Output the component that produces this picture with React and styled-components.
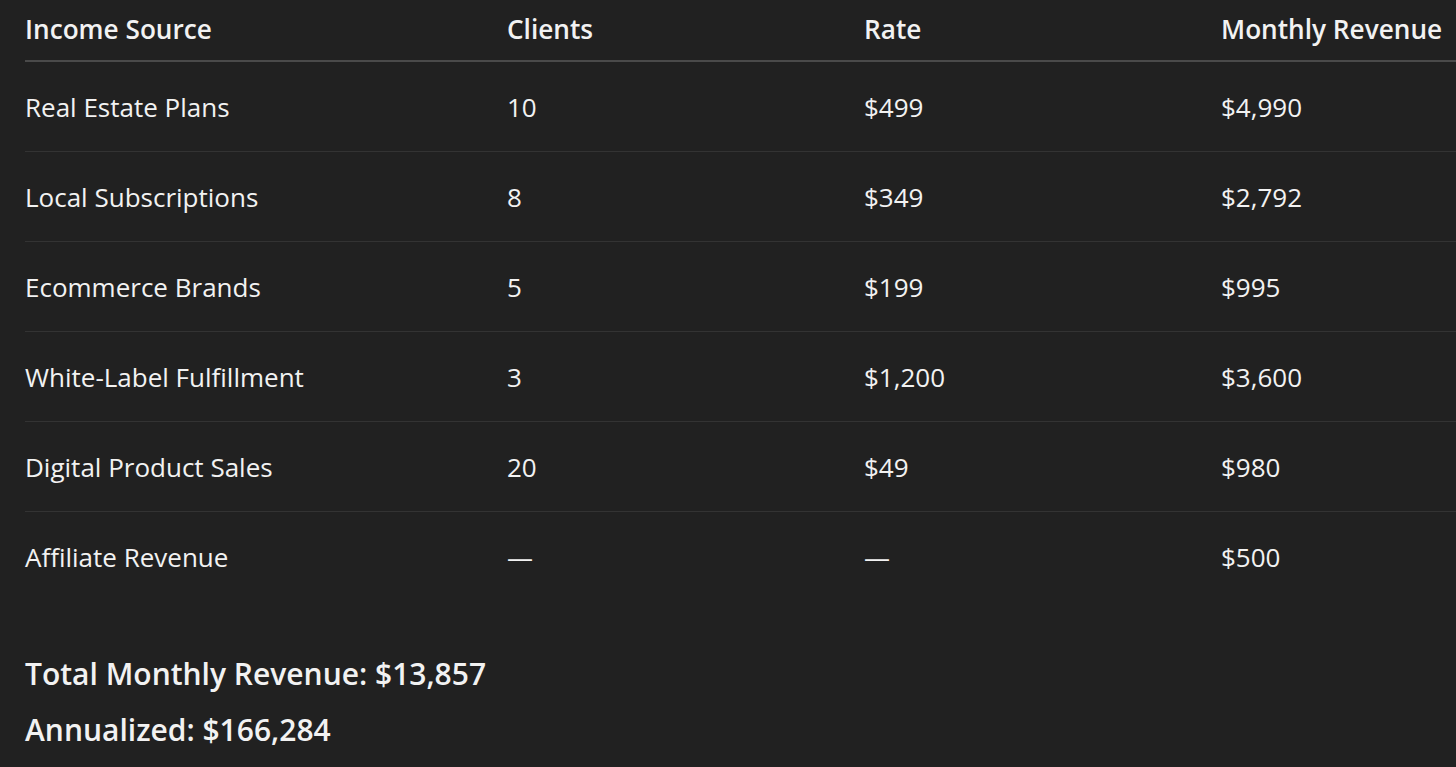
import React from 'react';
import styled, { createGlobalStyle } from 'styled-components';

const GlobalStyle = createGlobalStyle`
  html, body {
    margin: 0;
    padding: 0;
    background: #212121;
    overflow: hidden;
  }
  body {
    font-family: "Open Sans", "Noto Sans", sans-serif;
    color: #f2f2f2;
  }
`;

const rows = [
  { source: 'Real Estate Plans', clients: '10', rate: '$499', revenue: '$4,990' },
  { source: 'Local Subscriptions', clients: '8', rate: '$349', revenue: '$2,792' },
  { source: 'Ecommerce Brands', clients: '5', rate: '$199', revenue: '$995' },
  { source: 'White-Label Fulfillment', clients: '3', rate: '$1,200', revenue: '$3,600' },
  { source: 'Digital Product Sales', clients: '20', rate: '$49', revenue: '$980' },
  { source: 'Affiliate Revenue', clients: '—', rate: '—', revenue: '$500' },
];

const App = () => {
  return (
    <Page>
      <GlobalStyle />
      <Table>
        <colgroup>
          <col style={{ width: 482 }} />
          <col style={{ width: 357 }} />
          <col style={{ width: 357 }} />
          <col style={{ width: 357 }} />
        </colgroup>
        <thead>
          <tr>
            <HeadCell>Income Source</HeadCell>
            <HeadCell>Clients</HeadCell>
            <HeadCell>Rate</HeadCell>
            <HeadCell>Monthly Revenue</HeadCell>
          </tr>
        </thead>
        <tbody>
          {rows.map(({ source, clients, rate, revenue }, i) => (
            <Row key={source} $last={i === rows.length - 1}>
              <Cell>{source}</Cell>
              <Cell>{clients}</Cell>
              <Cell>{rate}</Cell>
              <Cell>{revenue}</Cell>
            </Row>
          ))}
        </tbody>
      </Table>
      <Summary>
        <SummaryLine>Total Monthly Revenue: $13,857</SummaryLine>
        <SummaryLine>Annualized: $166,284</SummaryLine>
      </Summary>
    </Page>
  );
};

const Page = styled.div`
  width: 1456px;
  height: 767px;
  padding-left: 25px;
  box-sizing: border-box;
  overflow: hidden;
`;

const Table = styled.table`
  border-collapse: collapse;
  table-layout: fixed;
  width: 1553px;
`;

const HeadCell = styled.th`
  text-align: left;
  font-weight: 600;
  font-size: 26.2px;
  height: 58px;
  padding: 0 0 2px;
  vertical-align: middle;
  border-bottom: 2px solid #4a4a4a;
  white-space: nowrap;
`;

const Row = styled.tr`
  border-bottom: ${(p) => (p.$last ? 'none' : '1.5px solid #333333')};
`;

const Cell = styled.td`
  font-size: 26px;
  height: 89px;
  padding: 0;
  vertical-align: middle;
  white-space: nowrap;
`;

const Summary = styled.div`
  display: flex;
  flex-direction: column;
  gap: 14px;
  margin-top: 52px;
`;

const SummaryLine = styled.p`
  margin: 0;
  font-size: 30px;
  font-weight: 600;
  line-height: 42px;
`;

export default App;
